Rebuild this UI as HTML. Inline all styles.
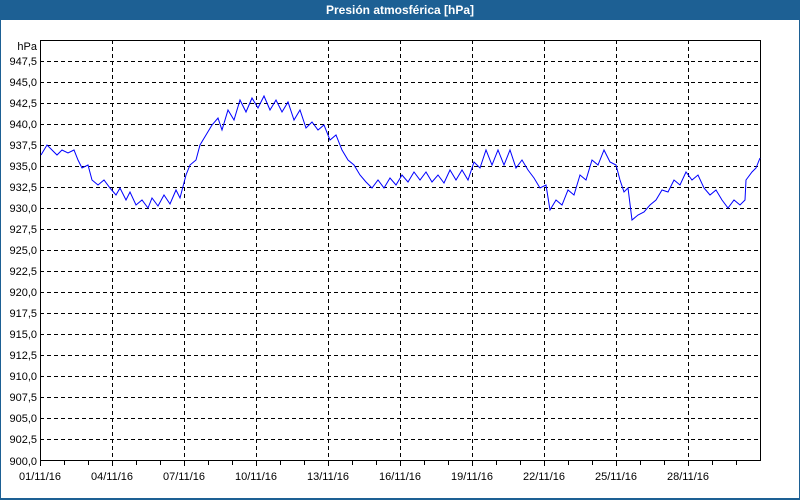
<!DOCTYPE html>
<html><head><meta charset="utf-8"><style>
body{margin:0;width:800px;height:500px;overflow:hidden;background:#fff;font-family:"Liberation Sans",sans-serif}
</style></head><body>
<svg width="800" height="500" xmlns="http://www.w3.org/2000/svg" style="display:block">
<rect x="0" y="0" width="800" height="500" fill="#1d6094"/>
<rect x="1" y="20" width="798" height="478" fill="#fff"/>
<text x="400" y="14" fill="#fff" font-size="12" font-weight="bold" text-anchor="middle" font-family="Liberation Sans,sans-serif">Presión atmosférica [hPa]</text>
<g stroke="#000" stroke-width="1" stroke-dasharray="4,3" shape-rendering="crispEdges">
<path d="M40 61.5H760M40 82.5H760M40 103.5H760M40 124.5H760M40 145.5H760M40 166.5H760M40 187.5H760M40 208.5H760M40 229.5H760M40 250.5H760M40 271.5H760M40 292.5H760M40 313.5H760M40 334.5H760M40 355.5H760M40 376.5H760M40 397.5H760M40 418.5H760M40 439.5H760"/>
<path d="M112.5 40V461M184.5 40V461M256.5 40V461M328.5 40V461M400.5 40V461M472.5 40V461M544.5 40V461M616.5 40V461M688.5 40V461"/>
</g>
<g stroke="#000" stroke-width="1" shape-rendering="crispEdges" fill="none">
<path d="M40.5 40.5H760.5V460.5H40.5Z"/>
<path d="M40.5 461V466M64.5 461V465M88.5 461V465M112.5 461V466M136.5 461V465M160.5 461V465M184.5 461V466M208.5 461V465M232.5 461V465M256.5 461V466M280.5 461V465M304.5 461V465M328.5 461V466M352.5 461V465M376.5 461V465M400.5 461V466M424.5 461V465M448.5 461V465M472.5 461V466M496.5 461V465M520.5 461V465M544.5 461V466M568.5 461V465M592.5 461V465M616.5 461V466M640.5 461V465M664.5 461V465M688.5 461V466M712.5 461V465M736.5 461V465"/>
</g>
<g font-size="11" fill="#000" text-anchor="end" font-family="Liberation Sans,sans-serif">
<text x="37" y="50">hPa</text>
<text x="37" y="65">947,5</text><text x="37" y="86">945,0</text><text x="37" y="107">942,5</text><text x="37" y="128">940,0</text><text x="37" y="149">937,5</text><text x="37" y="170">935,0</text><text x="37" y="191">932,5</text><text x="37" y="212">930,0</text><text x="37" y="233">927,5</text><text x="37" y="254">925,0</text><text x="37" y="275">922,5</text><text x="37" y="296">920,0</text><text x="37" y="317">917,5</text><text x="37" y="338">915,0</text><text x="37" y="359">912,5</text><text x="37" y="380">910,0</text><text x="37" y="401">907,5</text><text x="37" y="422">905,0</text><text x="37" y="443">902,5</text><text x="37" y="465">900,0</text>
</g>
<g font-size="11" fill="#000" text-anchor="middle" font-family="Liberation Sans,sans-serif">
<text x="40" y="480">01/11/16</text><text x="112" y="480">04/11/16</text><text x="184" y="480">07/11/16</text><text x="256" y="480">10/11/16</text><text x="328" y="480">13/11/16</text><text x="400" y="480">16/11/16</text><text x="472" y="480">19/11/16</text><text x="544" y="480">22/11/16</text><text x="616" y="480">25/11/16</text><text x="688" y="480">28/11/16</text>
</g>
<polyline fill="none" stroke="#0000ff" stroke-width="1" points="41,155 47,145 52,150 57,155 62,150 68,153 74,150 78,160 82,168 88,165 92,180 98,185 104,180 110,188 116,195 120,188 126,200 130,192 136,205 142,200 148,208 152,198 158,206 164,195 170,204 176,190 180,198 186,175 190,165 196,160 200,145 206,135 212,125 218,118 222,130 228,110 234,120 240,100 246,112 252,98 258,108 264,96 270,110 276,100 282,112 288,102 294,120 300,110 306,128 312,122 318,130 324,125 330,140 336,135 342,150 348,160 354,165 360,175 366,182 372,188 378,180 384,188 390,178 396,185 402,175 408,182 414,172 420,180 426,172 432,182 438,175 444,183 450,170 456,180 462,170 468,180 474,162 480,168 486,150 492,165 498,150 504,165 510,150 516,168 522,160 528,170 534,178 540,188 546,185 550,210 556,200 562,205 568,190 574,195 580,175 586,180 592,160 598,165 604,150 610,162 616,165 620,180 624,192 628,188 632,220 638,215 644,212 650,205 656,200 662,190 668,192 674,180 680,185 686,172 692,180 698,175 704,188 710,195 716,190 722,200 728,208 734,200 740,205 745,200 746,180 752,172 756,168 760,158"/>
</svg>
</body></html>
